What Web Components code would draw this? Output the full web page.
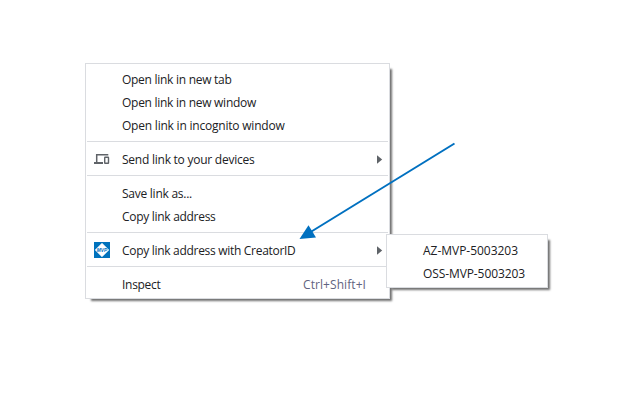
<!DOCTYPE html>
<html lang="en">
<head>
<meta charset="utf-8">
<title>Context menu</title>
<style>
body { margin: 0; width: 640px; height: 400px; overflow: hidden; background: #fff; font: 400 12px/23px "Open Sans", "Noto Sans", sans-serif; color: #202124; }
</style>
</head>
<body>
<menu-stage>
  <context-menu slot="main" style="width:305px">
    <menu-item fit="109.5">Open link in new tab</menu-item>
    <menu-item fit="134">Open link in new window</menu-item>
    <menu-item fit="162.5">Open link in incognito window</menu-item>
    <menu-divider></menu-divider>
    <menu-item fit="132.5" submenu><device-icon slot="icon"></device-icon>Send link to your devices</menu-item>
    <menu-divider></menu-divider>
    <menu-item fit="70">Save link as...</menu-item>
    <menu-item fit="93.5">Copy link address</menu-item>
    <menu-divider></menu-divider>
    <menu-item fit="173.5" submenu><mvp-icon slot="icon"></mvp-icon>Copy link address with CreatorID</menu-item>
    <menu-divider></menu-divider>
    <menu-item fit="38.5" keys="Ctrl+Shift+I" keysfit="63">Inspect</menu-item>
  </context-menu>
  <context-menu slot="sub" style="width:162px">
    <menu-item fit="95">AZ-MVP-5003203</menu-item>
    <menu-item fit="102">OSS-MVP-5003203</menu-item>
  </context-menu>
  <pointer-arrow slot="arrow"></pointer-arrow>
</menu-stage>
<script>
const define = (name, markup, setup) => customElements.define(name, class extends HTMLElement {
  connectedCallback() {
    if (this.shadowRoot) return;
    this.attachShadow({ mode: 'open' }).innerHTML = markup;
    if (setup) setup(this, this.shadowRoot);
  }
});

// Tracks a label so that it spans the given width.
const fit = (el, width, length) => {
  const natural = el.getBoundingClientRect().width;
  el.style.letterSpacing = (width - natural) / length + 'px';
};

define('menu-stage', `<style>
  :host { display: block; position: relative; width: 640px; height: 400px; }
  .main, .sub, .arrow { position: absolute; }
  .main { left: 85px; top: 63px; }
  .sub { left: 386px; top: 234px; }
  .arrow { left: 290px; top: 135px; }
</style>
<div class="main"><slot name="main"></slot></div>
<div class="sub"><slot name="sub"></slot></div>
<div class="arrow"><slot name="arrow"></slot></div>`);

define('context-menu', `<style>
  :host { display: flex; flex-direction: column; box-sizing: border-box; padding: 4px 1px 2px; background: #fff;
    border: 1px solid #dadce0; box-shadow: 4px 4px 2px -2px rgba(0,0,0,.56); }
</style><slot></slot>`);

define('menu-divider', `<style>
  :host { display: block; height: 11px; padding-top: 4px; box-sizing: border-box; }
  div { height: 1px; background: #dadce0; }
</style><div></div>`);

define('menu-item', `<style>
  :host { display: flex; align-items: center; height: 23px; padding: 0 5px 0 7px; }
  .icon { display: flex; width: 28px; height: 17px; flex: none; }
  .label, .keys { white-space: pre; }
  .keys { margin-left: auto; margin-right: 17px; color: #5f6380; }
  svg { display: block; margin-left: auto; flex: none; }
  [hidden] { display: none; }
</style>
<span class="icon"><slot name="icon"></slot></span><span class="label"><slot></slot></span>
<span class="keys" hidden></span>
<svg width="6" height="9" viewBox="0 0 6 9"><path d="M0 0.3L5.2 4.5L0 8.7Z" fill="#5f6368"/></svg>`, (host, root) => {
  const label = root.querySelector('.label');
  fit(label, +host.getAttribute('fit'), host.textContent.trim().length);
  if (!host.hasAttribute('submenu')) root.querySelector('svg').remove();
  if (host.hasAttribute('keys')) {
    const keys = root.querySelector('.keys');
    keys.hidden = false;
    keys.textContent = host.getAttribute('keys');
    fit(keys, +host.getAttribute('keysfit'), keys.textContent.length);
  }
});

define('device-icon', `<style>:host, svg { display: block; }</style>
<svg width="16" height="16" viewBox="0 0 16 16" fill="none" stroke="#5f6368">
  <path d="M14.3 3.7H2.7V11" stroke-width="1.5"/>
  <path d="M0 12H9" stroke-width="2"/>
  <rect x="10.7" y="6.3" width="3.8" height="6" rx=".4" stroke-width="1.4"/>
</svg>`);

define('mvp-icon', `<style>:host, svg { display: block; }</style>
<svg width="16" height="16" viewBox="0 0 16 16">
  <rect width="16" height="16" fill="#0072bc"/>
  <path d="M8 1.2L14.8 8L8 14.8L1.2 8Z" fill="#fff" stroke="#fff" stroke-width=".6" stroke-linejoin="round"/>
  <text x="8" y="9.9" text-anchor="middle" textLength="10.5" lengthAdjust="spacingAndGlyphs" font-family="Liberation Sans, sans-serif" font-size="5.2" font-weight="bold" font-style="italic" fill="#0072bc">MVP</text>
</svg>`);

define('pointer-arrow', `<style>:host, svg { display: block; }</style>
<svg width="170" height="110" viewBox="290 135 170 110">
  <path d="M454.5 143.5L309 233" stroke="#0070c0" stroke-width="2" fill="none"/>
  <path d="M299.5 239L308.5 225.3L316 237.5Z" fill="#0070c0"/>
</svg>`);
</script>
</body>
</html>
